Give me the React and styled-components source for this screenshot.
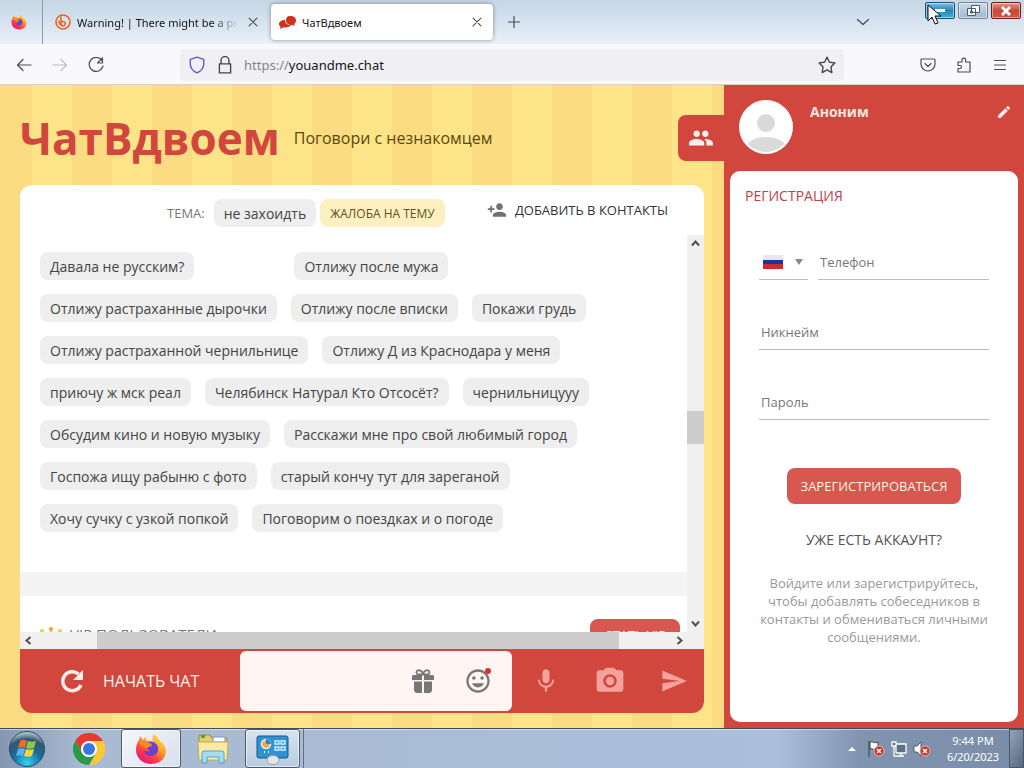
import React from "react";
import styled, { createGlobalStyle } from "styled-components";
import {
  MdGroup,
  MdPersonAdd,
  MdEdit,
  MdMic,
  MdPhotoCamera,
  MdSend,
  MdInsertEmoticon,
} from "react-icons/md";

const GlobalStyle = createGlobalStyle`
  *, *::before, *::after { box-sizing: border-box; }
  body {
    margin: 0;
    font-family: "Open Sans", "Noto Sans", sans-serif;
    font-size: 14px;
    color: #444;
  }
  button, input, select { font-family: inherit; }
  button { border: 0; background: none; padding: 0; cursor: pointer; color: inherit; }
  h1, h2, p { margin: 0; font-weight: 400; }
`;

const RED = "#d1473d";

const Screen = styled.div`
  display: flex;
  flex-direction: column;
  height: 100vh;
  overflow: hidden;
`;

/* Browser window */

const TabStrip = styled.div`
  display: flex;
  flex: none;
  height: 44px;
  background: linear-gradient(#c5d6e5, #d3e0ed 40%, #e9f0f8);
  font-family: "Noto Sans", sans-serif;
  font-size: 11px;
  color: #15141a;
`;

const PinnedTab = styled.div`
  display: flex;
  align-items: center;
  justify-content: center;
  width: 43px;
  padding-right: 4px;
  border-right: 1px solid #8c9aa8;
`;

const Tab = styled.div`
  display: flex;
  align-items: center;
  gap: 6px;
  width: 222px;
  height: 36px;
  margin: 4px 6px 0 0;
  padding: 0 8px;
  border-radius: 4px;
  background: ${(p) => (p.$active ? "#fff" : "transparent")};
  box-shadow: ${(p) => (p.$active ? "0 0 4px rgba(0, 0, 0, 0.4)" : "none")};
`;

const InactiveTab = styled(Tab)`
  margin-left: 4px;
  margin-right: 2px;
`;

const TabTitle = styled.span`
  flex: 1;
  overflow: hidden;
  white-space: nowrap;
  mask-image: ${(p) =>
    p.$fade ? "linear-gradient(to left, transparent, #000 28px)" : "none"};
`;

const IconButton = styled.button`
  display: flex;
  align-items: center;
  justify-content: center;
  flex: none;
  width: ${(p) => p.$w || 16}px;
  color: ${(p) => p.$color || "#4a4a52"};
`;

const TabListButton = styled(IconButton)`
  margin-left: auto;
`;

const WindowControls = styled.div`
  display: flex;
  gap: 3px;
  padding: 2px 3px 0 0;
  margin-left: 54px;
`;

const WindowButton = styled.button`
  display: flex;
  align-items: center;
  justify-content: center;
  width: 30px;
  height: 17px;
  border: 1px solid ${(p) => p.$edge};
  border-radius: 2px;
  background: ${(p) => p.$fill};
  box-shadow: inset 0 0 0 1px rgba(255, 255, 255, 0.45);
`;

const Pointer = styled.svg`
  position: absolute;
  right: 82px;
  top: 4px;
`;

const Toolbar = styled.div`
  display: flex;
  align-items: center;
  flex: none;
  height: 41px;
  padding: 2px 14px 0;
  background: #f9f9fb;
  border-bottom: 1px solid #d8d3c4;
`;

const NavButtons = styled.div`
  display: flex;
  gap: 16px;
  width: 166px;
`;

const AddressBar = styled.label`
  display: flex;
  align-items: center;
  gap: 10px;
  flex: 1;
  height: 32px;
  padding: 0 8px;
  border-radius: 4px;
  background: #f0f0f4;
`;

const Address = styled.span`
  flex: 1;
  font-family: "Noto Sans", sans-serif;
  font-size: 13px;
  color: #15141a;
`;

const Scheme = styled.span`
  color: #85858c;
`;

const ToolbarActions = styled.div`
  display: flex;
  justify-content: space-between;
  width: 166px;
  padding-left: 74px;
`;

/* Page */

const Page = styled.div`
  display: flex;
  flex: 1;
  min-height: 0;
  background: repeating-linear-gradient(
    90deg,
    #fcdc82 0 32px,
    #fee488 32px 72px,
    #fcdc82 72px 80px
  );
`;

const ChatColumn = styled.main`
  display: flex;
  flex: 1;
  flex-direction: column;
  min-width: 0;
  padding-bottom: 15px;
`;

const Masthead = styled.header`
  display: flex;
  align-items: center;
  flex: none;
  gap: 14px;
  height: 100px;
  padding: 6px 0 0 20px;
`;

const SiteTitle = styled.h1`
  font-size: 44px;
  line-height: 56px;
  font-weight: 700;
  color: ${RED};
`;

const Tagline = styled.p`
  flex: 1;
  font-size: 16px;
  color: #5c480c;
`;

const PanelToggle = styled.button`
  display: flex;
  align-items: center;
  justify-content: center;
  width: 46px;
  height: 46px;
  border-radius: 8px 0 0 8px;
  background: ${RED};
  color: #fdeeee;
`;

const ChatCard = styled.section`
  display: flex;
  flex: 1;
  flex-direction: column;
  min-height: 0;
  margin: 0 20px;
  border-radius: 12px 12px 0 0;
  overflow: hidden;
  background: #fff;
`;

const TopicBar = styled.div`
  display: flex;
  align-items: center;
  flex: none;
  height: 50px;
  padding: 6px 36px 0 147px;
`;

const TopicLabel = styled.span`
  margin-right: 9px;
  font-size: 13px;
  color: #777;
`;

const Chip = styled.button`
  height: 28px;
  padding: 0 10px;
  border-radius: 8px;
  background: ${(p) => (p.$warn ? "#fdf0c0" : "#eee")};
  color: ${(p) => (p.$warn ? "#5d5125" : "#444")};
  font-size: ${(p) => (p.$warn ? 12 : 14)}px;
  white-space: nowrap;
`;

const TopicChips = styled.div`
  display: flex;
  flex: 1;
  gap: 4px;
`;

const AddContact = styled.button`
  display: flex;
  align-items: center;
  gap: 8px;
  padding-bottom: 6px;
  font-size: 13px;
  color: #333;
  white-space: nowrap;

  svg { color: #707070; }
`;

const ScrollRow = styled.div`
  display: flex;
  flex: 1;
  min-height: 0;
`;

const ScrollContent = styled.div`
  flex: 1;
  min-width: 0;
  overflow: hidden;
`;

const ChipRows = styled.div`
  display: flex;
  flex-direction: column;
  gap: 14px;
  padding: 17px 20px 40px;
`;

const ChipRow = styled.div`
  display: flex;
  gap: ${(p) => (p.$wide ? 100 : 14)}px;
`;

const Band = styled.div`
  height: 24px;
  background: #f4f4f4;
`;

const VipHeader = styled.div`
  display: flex;
  align-items: flex-start;
  gap: 8px;
  padding: 23px 7px 10px 20px;
  color: #777;
  line-height: 30px;

  svg { margin-top: 8px; }
`;

const VipTitle = styled.h2`
  flex: 1;
  font-size: 15px;
`;

const RedButton = styled.button`
  height: 36px;
  padding: 0 14px;
  border-radius: 8px;
  background: #d8574f;
  color: #fff3ea;
  font-size: 13px;
`;

const VipButton = styled(RedButton)`
  height: 32px;
`;

const VerticalBar = styled.div`
  display: flex;
  flex-direction: column;
  align-items: center;
  justify-content: space-between;
  width: 17px;
  padding: 4px 0;
  background: #f0f0f0;
  color: #505050;
`;

const VerticalThumb = styled.div`
  width: 17px;
  height: 33px;
  margin-top: 163px;
  margin-bottom: auto;
  background: #cdcdcd;
`;

const HorizontalBar = styled.div`
  display: flex;
  align-items: center;
  flex: none;
  height: 17px;
  padding: 0 20px 0 4px;
  background: #f0f0f0;
  color: #505050;
`;

const HorizontalThumb = styled.div`
  flex: 1;
  height: 17px;
  margin: 0 56px 0 64px;
  background: #cdcdcd;
`;

const MessageBar = styled.form`
  display: flex;
  align-items: center;
  height: 64px;
  flex: none;
  margin: 0 20px;
  border-radius: 0 0 12px 12px;
  background: ${RED};
`;

const StartButton = styled.button`
  display: flex;
  align-items: center;
  gap: 16px;
  width: 220px;
  padding-left: 37px;
  font-size: 16px;
  color: #fff0ea;
`;

const MessageField = styled.div`
  display: flex;
  align-items: center;
  flex: 1;
  gap: 28px;
  min-width: 0;
  height: 60px;
  padding-right: 20px;
  border-radius: 6px;
  background: #fff5f3;
  color: #777;
`;

const MessageInput = styled.input`
  flex: 1;
  min-width: 0;
  height: 40px;
  border: 0;
  outline: 0;
  background: transparent;
`;

const SendActions = styled.div`
  display: flex;
  align-items: center;
  justify-content: space-between;
  width: 192px;
  padding: 0 16px 0 20px;
`;

/* Side panel */

const SidePanel = styled.aside`
  display: flex;
  flex: none;
  flex-direction: column;
  width: 300px;
  padding: 0 6px 6px;
  background: ${RED};
`;

const Profile = styled.div`
  display: flex;
  flex: none;
  height: 86px;
  gap: 17px;
  padding: 15px 6px 0 9px;
`;

const ProfileName = styled.span`
  flex: 1;
  padding-top: 2px;
  font-weight: 700;
  font-size: 14px;
  line-height: 20px;
  color: #fde6e2;
`;

const EditButton = styled(IconButton)`
  align-self: flex-start;
  padding-top: 3px;
`;

const Registration = styled.form`
  display: flex;
  flex: 1;
  flex-direction: column;
  align-items: center;
  padding: 15px 29px 0;
  border-radius: 10px;
  background: #fff;
`;

const FormTitle = styled.h2`
  align-self: flex-start;
  margin: 0 0 40px -14px;
  font-size: 14px;
  line-height: 20px;
  color: #c23d45;
`;

const FieldRow = styled.div`
  display: flex;
  gap: 10px;
  width: 100%;
  height: 34px;
  margin-bottom: 36px;
`;

const TextField = styled.input`
  flex: 1;
  min-width: 0;
  padding: 0 2px 2px;
  border: 0;
  border-bottom: 1px solid #bbb;
  outline: 0;
  background: transparent;
  font-size: 13px;

  &::placeholder { color: #777; opacity: 1; }
`;

const CountryPicker = styled.label`
  position: relative;
  display: flex;
  align-items: center;
  justify-content: space-between;
  width: 49px;
  padding: 0 5px 2px 4px;
  border-bottom: 1px solid #bbb;
`;

const CountrySelect = styled.select`
  position: absolute;
  inset: 0;
  width: 100%;
  opacity: 0;
`;

const SubmitButton = styled(RedButton)`
  margin-top: 12px;
`;

const LoginLink = styled.a`
  margin: 26px 0 24px;
  font-size: 14px;
  line-height: 20px;
  color: #555;
  text-decoration: none;
`;

const Hint = styled.p`
  font-size: 13px;
  line-height: 18px;
  text-align: center;
  color: #999;
`;

/* Desktop taskbar */

const Taskbar = styled.footer`
  display: flex;
  align-items: center;
  flex: none;
  height: 40px;
  padding-left: 8px;
  border-top: 1px solid #3f4b5a;
  background: linear-gradient(90deg, #8496b2, #a9bad1 8%, #a9bfda 76%, #8094b0 84%, #7a8da8);
  box-shadow: inset 0 1px 0 rgba(255, 255, 255, 0.5);
`;

const TaskButton = styled.button`
  display: flex;
  align-items: center;
  justify-content: center;
  width: ${(p) => p.$w}px;
  height: 39px;
  border: ${(p) => (p.$open ? "1px solid #4c5a6c" : "0")};
  border-radius: 3px;
  background: ${(p) =>
    p.$open ? (p.$current ? "linear-gradient(135deg, #f4f7fb, #d6e0ec)" : "linear-gradient(#d9e3ef, #b9cadf)") : "none"};
  box-shadow: ${(p) => (p.$open ? "inset 0 0 0 1px rgba(255,255,255,.6)" : "none")};
`;

const LauncherButton = styled(TaskButton)`
  padding-left: 10px;
`;

const StackEdge = styled.div`
  width: 4px;
  height: 39px;
  margin-right: auto;
  border-right: 1px solid #5f6f83;
`;

const Tray = styled.div`
  display: flex;
  align-items: center;
  gap: 6px;
`;

const TrayArrow = styled.svg`
  margin-right: 4px;
`;

const TrayEnd = styled.div`
  display: flex;
  align-items: center;
`;

const Clock = styled.time`
  width: 72px;
  font-family: "Noto Sans", sans-serif;
  font-size: 11px;
  line-height: 16px;
  text-align: center;
  color: #fff;
`;

const ShowDesktop = styled.button`
  width: 15px;
  height: 39px;
  border: 1px solid #46566b;
  background: linear-gradient(120deg, #93a4b8, #56687e);
`;

const Line = ({ size = 16, d, ...rest }) => (
  <svg width={size} height={size} viewBox="0 0 16 16" fill="none" stroke="currentColor" strokeWidth="1.2" strokeLinecap="round" strokeLinejoin="round" {...rest}>
    <path d={d} />
  </svg>
);

const Chevron = ({ d }) => (
  <svg width="9" height="9" viewBox="0 0 9 9" fill="none" stroke="currentColor" strokeWidth="2">
    <path d={d} />
  </svg>
);

const CLOSE = "M3.500 3.500l9 9M12.500 3.500l-9 9";

const RefreshIcon = () => (
  <svg width="30" height="30" viewBox="0 0 30 30">
    <path d="M24 19A9.500 9.500 0 1 1 21.500 8" fill="none" stroke="currentColor" strokeWidth="3.400" />
    <path d="M26 4v10H16z" fill="currentColor" />
  </svg>
);

const FirefoxLogo = ({ size }) => (
  <svg width={size} height={size} viewBox="0 0 32 32">
    <defs>
      <linearGradient id="fox" x1="0.85" y1="0.05" x2="0.2" y2="0.95">
        <stop offset="0" stopColor="#ffe94a" />
        <stop offset="0.4" stopColor="#ff9a24" />
        <stop offset="0.7" stopColor="#ff3b47" />
        <stop offset="1" stopColor="#e01583" />
      </linearGradient>
    </defs>
    <path d="M19 1c3 2 4 4 5 6 4 3 7 6 7 11 0 8-7 13-15 13S1 25 1 17c0-4 1-7 3-10l1-4 3 4 3-3v4c3-1 5 0 7 0-1-3-1-5 1-7z" fill="url(#fox)" />
    <path d="M10 11c3-3 9-3 12 1 3 5 0 11-6 11-4 0-7-3-7-6 2 2 4 2 6 0-3 0-4-2-2-3 1-1 3 0 4-1-2-2-4-3-7-2z" fill="#6b3fd0" />
    <path d="M4 8c3-1 6 0 7 2 2-1 5 0 6 2-2 1-4 1-4 3-4 0-8-3-9-7z" fill="#ff8a1e" />
  </svg>
);

const BitlyLogo = () => (
  <svg width="16" height="16" viewBox="0 0 16 16" fill="none" stroke="#ee6123">
    <circle cx="8" cy="8" r="7" strokeWidth="1.6" />
    <path d="M6 3v5.500M6 8.500c2-2 5-.5 4 2s-4 2-4-.5zM4 7c0 3 1 4 3 4" strokeWidth="1.500" strokeLinecap="round" />
  </svg>
);

const ChatFavicon = () => (
  <svg width="17" height="16" viewBox="0 0 17 16" fill="#cf3219">
    <path d="M11 2c4 0 6 2 6 4.500 0 2-1 3-2 3.500l1 2-3-1c-4 0-6-2-6-4.500S8 2 11 2z" />
    <path d="M6 6c-3 0-6 1.500-6 4 0 1 .5 2 1.500 2.700L1 15l3-1.500c5 .5 7-1 8-2.500-4 0-6-2-6-5z" />
  </svg>
);

const GiftIcon = () => (
  <svg width="22" height="24" viewBox="0 0 22 24" fill="currentColor">
    <path d="M11 5C10 1 5 0 4.500 3c-.3 1.500 1 2.500 2.500 2.500h8c1.500 0 2.800-1 2.500-2.500C17 0 12 1 11 5z" fill="none" stroke="currentColor" strokeWidth="1.800" />
    <path d="M1 6h9v5H0V7zM12 6h9l1 1v4H12zM2 12.500h8V24H4l-2-2zM12 12.500h8V22l-2 2h-6z" />
  </svg>
);

const SmileIcon = () => (
  <svg width="28" height="28" viewBox="0 0 28 28">
    <MdInsertEmoticon size={28} />
    <circle cx="24" cy="4" r="3" fill="#dc3030" />
  </svg>
);

const Avatar = () => (
  <svg width="54" height="54" viewBox="0 0 54 54">
    <defs>
      <clipPath id="avatarClip"><circle cx="27" cy="27" r="25" /></clipPath>
    </defs>
    <circle cx="27" cy="27" r="27" fill="#fff" />
    <g clipPath="url(#avatarClip)" fill="#dadada">
      <circle cx="27" cy="23" r="9" />
      <ellipse cx="27" cy="46" rx="19" ry="9" />
    </g>
  </svg>
);

const Flag = () => (
  <svg width="20" height="14" viewBox="0 0 20 14">
    <path fill="#e8e8ec" d="M0 0h20v5H0z" />
    <path fill="#1536a5" d="M0 5h20v4H0z" />
    <path fill="#d22c2a" d="M0 9h20v5H0z" />
  </svg>
);

const Crown = () => (
  <svg width="22" height="18" viewBox="0 0 22 18" fill="#f3cb45">
    <path d="M2 5l5 4 4-7 4 7 5-4-2 12H4z" />
    <circle cx="2" cy="4" r="2" />
    <circle cx="11" cy="2" r="2" fill="#f0a030" />
    <circle cx="20" cy="4" r="2" />
  </svg>
);

const StartOrb = () => (
  <svg width="38" height="38" viewBox="0 0 38 38">
    <defs>
      <radialGradient id="orb" cx="0.5" cy="0.9" r="0.9">
        <stop offset="0" stopColor="#35d4f5" />
        <stop offset="0.45" stopColor="#176c9f" />
        <stop offset="0.75" stopColor="#34566f" />
        <stop offset="1" stopColor="#c4d5e2" />
      </radialGradient>
    </defs>
    <circle cx="19" cy="19" r="17.500" fill="url(#orb)" stroke="#294a66" />
    <path d="M12 11c3-2 5-1 7 0l-2 7c-2-1-4-1-7 0z" fill="#f0682c" />
    <path d="M20 11c3 1 5 1 8 0l-2 7c-3 1-5 1-8 0z" fill="#8fca3d" />
    <path d="M10 19c3-1 5-1 7 0l-2 7c-2-1-4-1-7 0z" fill="#55b4ea" />
    <path d="M18 19c3 1 5 1 8 0l-2 7c-3 1-5 1-8 0z" fill="#fbd244" />
  </svg>
);

const ChromeLogo = () => (
  <svg width="32" height="32" viewBox="0 0 32 32">
    <path d="M2.140 8A16 16 0 0 1 29.860 8H16a8 8 0 0 0-6.930 12z" fill="#e33b2e" />
    <path d="M29.860 8A16 16 0 0 1 16 32l6.930-12A8 8 0 0 0 16 8z" fill="#fcc934" />
    <path d="M16 32A16 16 0 0 1 2.140 8l6.930 12a8 8 0 0 0 13.860 0z" fill="#2a9a49" />
    <circle cx="16" cy="16" r="8" fill="#fff" />
    <circle cx="16" cy="16" r="6" fill="#3478e5" />
  </svg>
);

const FolderIcon = () => (
  <svg width="34" height="32" viewBox="0 0 34 32">
    <path d="M3 2h11l2 3h15v21H3z" fill="#e9c969" stroke="#a48a3c" />
    <path d="M5 2h4v3H5z" fill="#49a64c" />
    <path d="M17 4h12v5H17z" fill="#fff" stroke="#7a97b8" />
    <path d="M2 9h30l-1 18H3z" fill="#faeaa4" stroke="#c9ae5a" />
    <path d="M6 30V20q0-2 2-2h18q2 0 2 2v10h-5v-6H11v6z" fill="#a4dcf3" stroke="#51a3cc" />
  </svg>
);

const ControlPanelIcon = () => (
  <svg width="34" height="32" viewBox="0 0 34 32">
    <rect x="1" y="3" width="31" height="22" rx="2" fill="#2f93d2" stroke="#195781" />
    <circle cx="10" cy="11" r="4.500" fill="#f2a54c" stroke="#e6f3fc" strokeWidth="1.500" />
    <path d="M10 11V6a5 5 0 0 1 5 5z" fill="#2e87c5" />
    <path d="M19 8h4v3h-4zM25 8h4v3h-4zM19 14h4v3h-4zM25 14h4v3h-4z" fill="none" stroke="#d9effc" strokeWidth="1.300" />
    <path d="M8 19h1M12 19h1" stroke="#fff" strokeWidth="2" />
    <ellipse cx="17" cy="27" rx="6" ry="4.500" fill="#e3e5e8" stroke="#9da4ad" />
  </svg>
);

const Blocked = () => (
  <g>
    <circle cx="12" cy="11" r="5" fill="#d4302a" stroke="#f4d8d4" strokeWidth="0.700" />
    <path d="M10 9l4 4M14 9l-4 4" stroke="#fff" strokeWidth="1.500" />
  </g>
);

const chipRows = [
  ["Давала не русским?", "Отлижу после мужа"],
  ["Отлижу растраханные дырочки", "Отлижу после вписки", "Покажи грудь"],
  ["Отлижу растраханной чернильнице", "Отлижу Д из Краснодара у меня"],
  ["приючу ж мск реал", "Челябинск Натурал Кто Отсосёт?", "чернильницууу"],
  ["Обсудим кино и новую музыку", "Расскажи мне про свой любимый город"],
  ["Госпожа ищу рабыню с фото", "старый кончу тут для зареганой"],
  ["Хочу сучку с узкой попкой", "Поговорим о поездках и о погоде"],
];

const noSubmit = (e) => e.preventDefault();

function BrowserChrome() {
  return (
    <>
      <TabStrip>
        <PinnedTab><FirefoxLogo size={16} /></PinnedTab>
        <InactiveTab>
          <BitlyLogo />
          <TabTitle $fade>Warning! | There might be a problem</TabTitle>
          <IconButton aria-label="Close tab"><Line d={CLOSE} size={14} /></IconButton>
        </InactiveTab>
        <Tab $active>
          <ChatFavicon />
          <TabTitle>ЧатВдвоем</TabTitle>
          <IconButton aria-label="Close tab"><Line d={CLOSE} size={14} /></IconButton>
        </Tab>
        <IconButton $w={30} aria-label="New tab"><Line d="M8 2.500v11M2.500 8h11" /></IconButton>
        <TabListButton $w={16} aria-label="List tabs"><Line d="M2.500 5.500l5.500 5 5.500-5" /></TabListButton>
        <WindowControls>
          <WindowButton aria-label="Minimize" $edge="#1d4f73" $fill="linear-gradient(#7fbce0, #2c83b8 50%, #35b8d8)">
            <svg width="12" height="5"><path d="M1 1h10v3H1z" fill="#fff" /></svg>
          </WindowButton>
          <WindowButton aria-label="Restore" $edge="#73879c" $fill="linear-gradient(#c9d9e8, #a4b9d0)">
            <svg width="13" height="11" viewBox="0 0 13 11" fill="#fff" stroke="#4b5c6e"><path d="M4.500 .5h8v7h-8zM.5 3.500h8v7h-8zM3.500 6h2v2h-2z" /></svg>
          </WindowButton>
          <WindowButton aria-label="Close" $edge="#642019" $fill="linear-gradient(#e19b8d, #c34a36 50%, #cb5a42)">
            <svg width="12" height="10" viewBox="0 0 12 10" stroke="#fff" strokeWidth="2.800"><path d="M2 1l8 8M10 1L2 9" /></svg>
          </WindowButton>
        </WindowControls>
        <Pointer width="15" height="21" viewBox="0 0 15 21">
          <path d="M1 1v16l4-4 3 7 3-1-3-7h6z" fill="#fff" stroke="#111" />
        </Pointer>
      </TabStrip>
      <Toolbar>
        <NavButtons>
          <IconButton $w={20} aria-label="Back"><Line d="M15 8H1.500M7 2.500L1.500 8 7 13.500" /></IconButton>
          <IconButton $w={20} $color="#bdbdc2" aria-label="Forward"><Line d="M1 8h13.500M9 2.500l5.500 5.500L9 13.500" /></IconButton>
          <IconButton $w={20} aria-label="Reload"><Line d="M14 3.500A7 7 0 1 0 15 9M14.500 1v5h-5z" /></IconButton>
        </NavButtons>
        <AddressBar>
          <Line size={18} d="M8 1l6 2v4c0 4-2 6-6 8-4-2-6-4-6-8V3z" stroke="#5b58c9" />
          <Line size={18} d="M4.500 7V4a3.500 3.500 0 0 1 7 0v3M3 7h10v8H3z" />
          <Address><Scheme>https://</Scheme>youandme.chat</Address>
          <Line size={18} d="M8 1l2.100 4.500 4.900.7-3.500 3.500.8 5L8 12.300l-4.300 2.400.8-5L1 6.200l4.900-.7z" />
        </AddressBar>
        <ToolbarActions>
          <IconButton $w={20} aria-label="Save to Pocket"><Line d="M2 2h12q1 0 1 1v4a7 7 0 0 1-14 0V3q0-1 1-1zM5 6.500l3 3 3-3" /></IconButton>
          <IconButton $w={20} aria-label="Extensions"><Line d="M2 5h4V3a1.800 1.800 0 0 1 3.600 0v2H14v10H2v-3.500h2a1.500 1.500 0 0 0 0-3H2z" /></IconButton>
          <IconButton $w={20} aria-label="Menu"><Line d="M2.500 3.500h11M2.500 8h11M2.500 12.500h11" /></IconButton>
        </ToolbarActions>
      </Toolbar>
    </>
  );
}

function Chat() {
  return (
    <ChatColumn>
      <Masthead>
        <SiteTitle>ЧатВдвоем</SiteTitle>
        <Tagline>Поговори с незнакомцем</Tagline>
        <PanelToggle aria-label="Контакты"><MdGroup size={26} /></PanelToggle>
      </Masthead>
      <ChatCard>
        <TopicBar>
          <TopicLabel>ТЕМА:</TopicLabel>
          <TopicChips>
            <Chip>не захоидть</Chip>
            <Chip $warn>ЖАЛОБА НА ТЕМУ</Chip>
          </TopicChips>
          <AddContact><MdPersonAdd size={20} />ДОБАВИТЬ В КОНТАКТЫ</AddContact>
        </TopicBar>
        <ScrollRow>
          <ScrollContent>
            <ChipRows>
              {chipRows.map((row, i) => (
                <ChipRow key={row[0]} $wide={i === 0}>
                  {row.map((label) => <Chip key={label}>{label}</Chip>)}
                </ChipRow>
              ))}
            </ChipRows>
            <Band />
            <VipHeader>
              <Crown />
              <VipTitle>VIP ПОЛЬЗОВАТЕЛИ</VipTitle>
              <VipButton>СТАТЬ VIP</VipButton>
            </VipHeader>
          </ScrollContent>
          <VerticalBar>
            <Chevron d="M1 6.500l3.500-4 3.500 4" />
            <VerticalThumb />
            <Chevron d="M1 2.500l3.500 4 3.500-4" />
          </VerticalBar>
        </ScrollRow>
        <HorizontalBar>
          <Chevron d="M6.500 1l-4 3.500 4 3.500" />
          <HorizontalThumb />
          <Chevron d="M2.500 1l4 3.500-4 3.500" />
        </HorizontalBar>
      </ChatCard>
      <MessageBar onSubmit={noSubmit}>
        <StartButton type="button"><RefreshIcon />НАЧАТЬ ЧАТ</StartButton>
        <MessageField>
          <MessageInput aria-label="Сообщение" />
          <IconButton type="button" $w={26} $color="#777" aria-label="Подарок"><GiftIcon /></IconButton>
          <IconButton type="button" $w={28} $color="#777" aria-label="Смайлы"><SmileIcon /></IconButton>
        </MessageField>
        <SendActions>
          <IconButton type="button" $w={28} $color="#f6a29c" aria-label="Микрофон"><MdMic size={32} /></IconButton>
          <IconButton type="button" $w={32} $color="#f6a29c" aria-label="Камера"><MdPhotoCamera size={32} /></IconButton>
          <IconButton $w={28} $color="#f6a29c" aria-label="Отправить"><MdSend size={28} /></IconButton>
        </SendActions>
      </MessageBar>
    </ChatColumn>
  );
}

function Side() {
  return (
    <SidePanel>
      <Profile>
        <Avatar />
        <ProfileName>Аноним</ProfileName>
        <EditButton type="button" $color="#fff0ec" aria-label="Изменить"><MdEdit size={18} /></EditButton>
      </Profile>
      <Registration onSubmit={noSubmit}>
        <FormTitle>РЕГИСТРАЦИЯ</FormTitle>
        <FieldRow>
          <CountryPicker>
            <Flag />
            <svg width="8" height="6"><path d="M0 0h8L4 6z" fill="#888" /></svg>
            <CountrySelect aria-label="Страна"><option>Россия</option></CountrySelect>
          </CountryPicker>
          <TextField type="tel" placeholder="Телефон" aria-label="Телефон" />
        </FieldRow>
        <FieldRow><TextField placeholder="Никнейм" aria-label="Никнейм" /></FieldRow>
        <FieldRow><TextField type="password" placeholder="Пароль" aria-label="Пароль" /></FieldRow>
        <SubmitButton>ЗАРЕГИСТРИРОВАТЬСЯ</SubmitButton>
        <LoginLink href="#login">УЖЕ ЕСТЬ АККАУНТ?</LoginLink>
        <Hint>Войдите или зарегистрируйтесь, чтобы добавлять собеседников в контакты и обмениваться личными сообщениями.</Hint>
      </Registration>
    </SidePanel>
  );
}

function Desktop() {
  return (
    <Taskbar>
      <TaskButton $w={38} aria-label="Start"><StartOrb /></TaskButton>
      <LauncherButton $w={75} aria-label="Chrome"><ChromeLogo /></LauncherButton>
      <TaskButton $w={60} $open $current aria-label="Firefox"><FirefoxLogo size={32} /></TaskButton>
      <TaskButton $w={64} aria-label="Explorer"><FolderIcon /></TaskButton>
      <TaskButton $w={55} $open aria-label="Control Panel"><ControlPanelIcon /></TaskButton>
      <StackEdge />
      <Tray>
        <TrayArrow width="10" height="6"><path d="M1 5l4-4 4 4z" fill="#fff" /></TrayArrow>
        <svg width="18" height="18" viewBox="0 0 18 18">
          <path d="M2 1v16M3 2c3-1 4 2 8 0v7c-4 2-5-1-8 0z" fill="#fff" stroke="#333f4d" />
          <Blocked />
        </svg>
        <svg width="16" height="18" viewBox="0 0 16 18">
          <path d="M5 4h10v9H5zM7 16h6M10 13v3M1 2h4v4H1zM3 6v10h4" fill="#5d7088" stroke="#fff" strokeWidth="1.300" />
        </svg>
        <svg width="18" height="18" viewBox="0 0 18 18">
          <path d="M1 6h3l4-4v14l-4-4H1z" fill="#fff" stroke="#4c5a6a" />
          <Blocked />
        </svg>
        <TrayEnd>
          <Clock>9:44 PM<br />6/20/2023</Clock>
          <ShowDesktop aria-label="Show desktop" />
        </TrayEnd>
      </Tray>
    </Taskbar>
  );
}

export default function App() {
  return (
    <Screen>
      <GlobalStyle />
      <BrowserChrome />
      <Page>
        <Chat />
        <Side />
      </Page>
      <Desktop />
    </Screen>
  );
}
